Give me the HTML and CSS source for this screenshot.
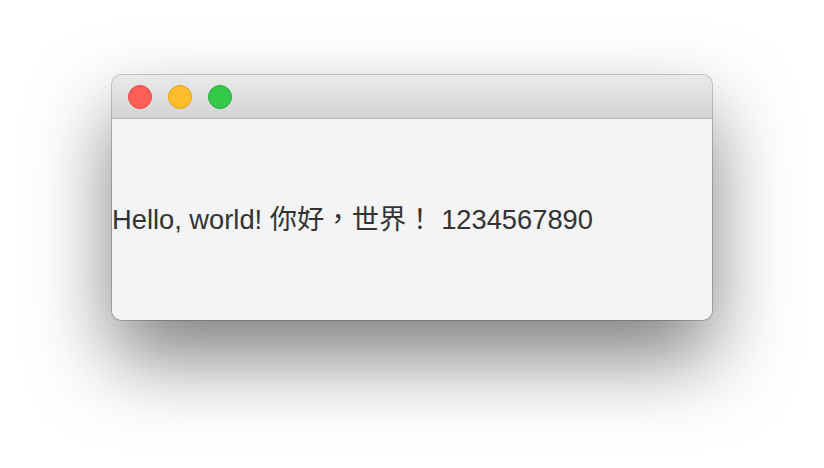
FILE: index.html
```html
<!DOCTYPE html>
<html>
<head>
    <title>Hello</title>
    <link rel="stylesheet" href="styles.css">
</head>
<body>
    <div class="ventana">
        <div class="barra">
            <span class="boton cerrar"></span>
            <span class="boton minimizar"></span>
            <span class="boton maximizar"></span>
        </div>
        <div class="contenido">
            <p class="saludo">Hello, world! 你好，世界！ 1234567890</p>
        </div>
    </div>
</body>
</html>
```

FILE: styles.css
```css
html {
    height: 100%;
    background: #ffffff;
}

body {
    margin: 0;
    min-height: 100%;
    box-sizing: border-box;
    padding: 75px 112px;
    font-family: "Liberation Sans", "Noto Sans CJK TC", sans-serif;
}

.ventana {
    width: 600px;
    height: 245px;
    display: flex;
    flex-direction: column;
    border-radius: 10px;
    overflow: hidden;
    box-shadow: 0 0 0 1px rgba(0, 0, 0, 0.2), 0 38px 80px rgba(0, 0, 0, 0.5);
}

/* Barra de titulo con los tres botones */
.barra {
    height: 43px;
    display: flex;
    align-items: center;
    gap: 16px;
    padding: 0 16px;
    background: linear-gradient(#e9e9e9, #d4d4d4);
    border-bottom: 1px solid #b8b8b8;
}

.boton {
    width: 22px;
    height: 22px;
    border-radius: 50%;
    border: 1px solid;
}

.cerrar {
    background: #ff5f57;
    border-color: #e2463f;
}

.minimizar {
    background: #ffbd2e;
    border-color: #e1a116;
}

.maximizar {
    background: #35c94a;
    border-color: #24a83a;
}

.contenido {
    flex: 1;
    display: flex;
    align-items: center;
    padding-bottom: 6px;
    background: #f4f4f4;
}

.saludo {
    margin: 0;
    font-size: 27.3px;
    color: #333333;
}
```
